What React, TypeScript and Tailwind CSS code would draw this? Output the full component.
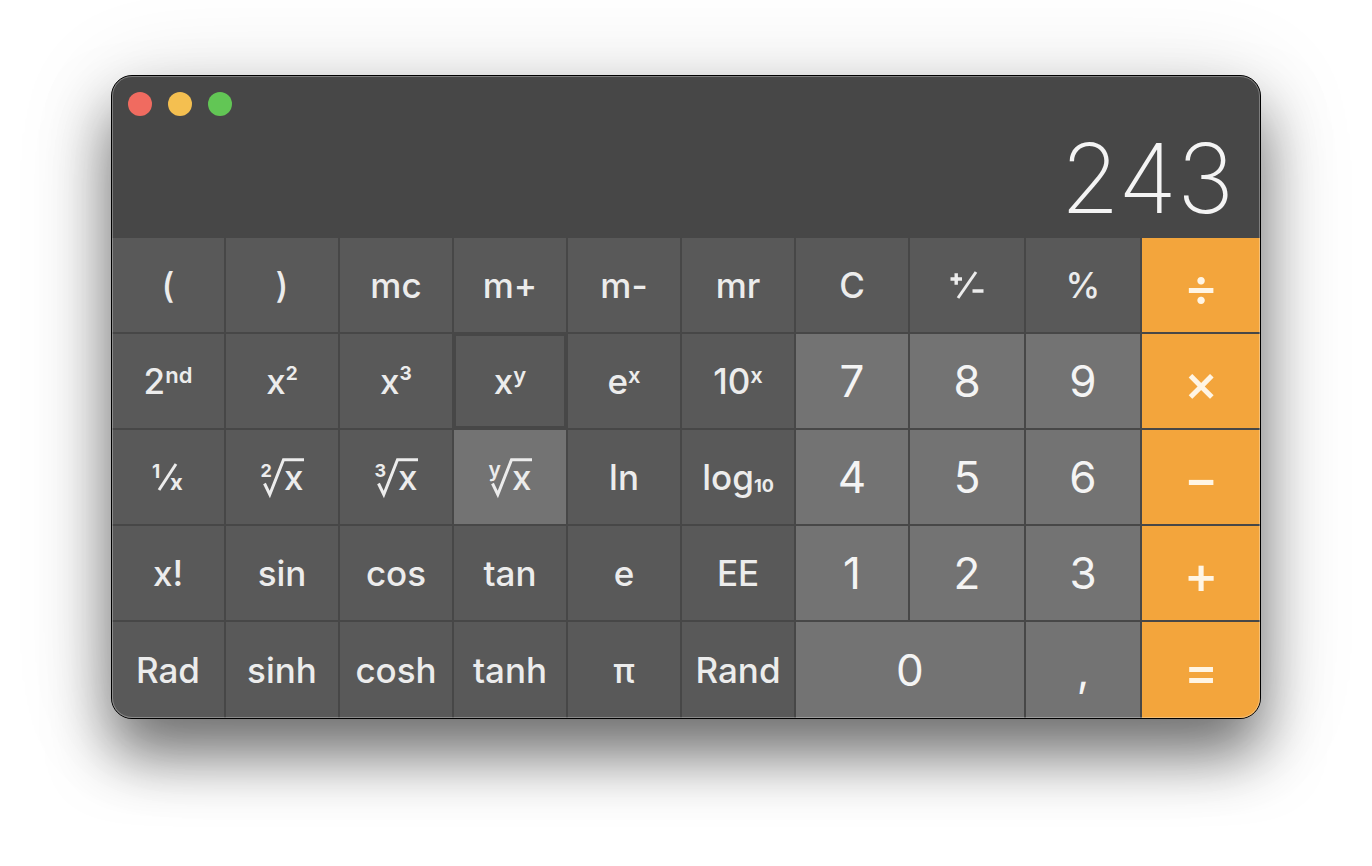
import type { ReactNode } from 'react'

type Tone = 'function' | 'digit' | 'operator'

const tones: Record<Tone, string> = {
  function: 'bg-[#595959] text-[35px] font-medium text-[#ececec] active:bg-[#737373]',
  digit: 'bg-[#737373] text-[44px] text-[#f4f4f4] active:bg-[#8c8c8c]',
  operator: 'bg-[#f3a53c] pt-1 text-[52px] font-medium text-[#fff5e4] active:bg-[#c9842b]',
}

interface KeyProps {
  tone?: Tone
  label?: string
  className?: string
  children: ReactNode
}

function Key({ tone = 'function', label, className = '', children }: KeyProps) {
  return (
    <button
      type="button"
      aria-label={label}
      className={`flex min-w-0 items-center justify-center leading-none ${tones[tone]} ${className}`}
    >
      {children}
    </button>
  )
}

function Power({ base, exponent }: { base: string; exponent: string }) {
  const size = /\d/.test(exponent) ? 'text-[19px] font-bold' : 'text-[22px] font-semibold'
  return (
    <span className="flex items-start">
      {base}
      <span className={`leading-none ${size}`}>{exponent}</span>
    </span>
  )
}

function Root({ index }: { index: string }) {
  const letter = index === 'y'
  return (
    <svg viewBox="-4 -8 56 56" className="size-14" fill="currentColor" aria-hidden="true">
      <path
        d="M6.5 26.5 11.8 37.5 25.5 2.8H46"
        fill="none"
        stroke="currentColor"
        strokeWidth="3"
      />
      <text x="2.5" y="19.5" fontSize={letter ? 21 : 18} fontWeight={letter ? 600 : 700}>
        {index}
      </text>
      <text x="26" y="33" fontSize="35">
        x
      </text>
    </svg>
  )
}

function Reciprocal() {
  return (
    <svg viewBox="-4 -8 56 56" className="size-14" fill="currentColor" aria-hidden="true">
      <path d="M15 33 32 7" fill="none" stroke="currentColor" strokeWidth="3" />
      <text x="8" y="20.5" fontSize="19" fontWeight="700">
        1
      </text>
      <text x="26" y="33" fontSize="22" fontWeight="700">
        x
      </text>
    </svg>
  )
}

function PlusMinus() {
  return (
    <svg
      viewBox="0 0 40 40"
      className="h-10 w-10"
      fill="none"
      stroke="currentColor"
      strokeWidth="3.4"
      aria-hidden="true"
    >
      <path d="M3.5 14h11.5M9.2 8.2v11.6M25.5 26h11" />
      <path d="M11 33 29 7" strokeWidth="3" />
    </svg>
  )
}

export default function App() {
  return (
    <main className="min-h-screen bg-white px-[111px] pt-[75px] pb-[147px] font-['Inter','Liberation_Sans',sans-serif]">
      <section
        aria-label="Calculator"
        className="relative rounded-[21px] border border-black bg-[#474747] shadow-[0_36px_60px_rgba(0,0,0,0.52),0_10px_100px_rgba(0,0,0,0.14)]"
      >
        <div className="overflow-hidden rounded-[20px]">
          <header className="flex h-[162px] flex-col justify-between pt-4">
            <div className="flex gap-4 px-4">
              <button type="button" aria-label="Close" className="size-6 rounded-full bg-[#f06b60]" />
              <button type="button" aria-label="Minimize" className="size-6 rounded-full bg-[#f4bf50]" />
              <button type="button" aria-label="Zoom" className="size-6 rounded-full bg-[#62c655]" />
            </div>
            <output className="block px-[26px] pb-3 text-right text-[96px] leading-none font-extralight text-[#f4f4f4]">
              243
            </output>
          </header>

          <div className="grid grid-cols-[repeat(7,112fr)_114fr_114fr_118fr] grid-rows-[repeat(4,94px)_96px] gap-[2px]">
            <Key>(</Key>
            <Key>)</Key>
            <Key>mc</Key>
            <Key>m+</Key>
            <Key>m-</Key>
            <Key>mr</Key>
            <Key>C</Key>
            <Key label="Plus minus"><PlusMinus /></Key>
            <Key>%</Key>
            <Key tone="operator">÷</Key>

            <Key><Power base="2" exponent="nd" /></Key>
            <Key><Power base="x" exponent="2" /></Key>
            <Key><Power base="x" exponent="3" /></Key>
            <Key className="outline-2 -outline-offset-2 outline-[#474747]"><Power base="x" exponent="y" /></Key>
            <Key><Power base="e" exponent="x" /></Key>
            <Key><Power base="10" exponent="x" /></Key>
            <Key tone="digit">7</Key>
            <Key tone="digit">8</Key>
            <Key tone="digit">9</Key>
            <Key tone="operator">×</Key>

            <Key label="Reciprocal"><Reciprocal /></Key>
            <Key label="Square root"><Root index="2" /></Key>
            <Key label="Cube root"><Root index="3" /></Key>
            <Key label="Nth root" className="bg-[#737373]!"><Root index="y" /></Key>
            <Key>ln</Key>
            <Key>
              <span className="flex items-end">
                log<span className="text-[18px] leading-none font-bold">10</span>
              </span>
            </Key>
            <Key tone="digit">4</Key>
            <Key tone="digit">5</Key>
            <Key tone="digit">6</Key>
            <Key tone="operator">−</Key>

            <Key>x!</Key>
            <Key>sin</Key>
            <Key>cos</Key>
            <Key>tan</Key>
            <Key>e</Key>
            <Key>EE</Key>
            <Key tone="digit">1</Key>
            <Key tone="digit">2</Key>
            <Key tone="digit">3</Key>
            <Key tone="operator">+</Key>

            <Key>Rad</Key>
            <Key>sinh</Key>
            <Key>cosh</Key>
            <Key>tanh</Key>
            <Key>π</Key>
            <Key>Rand</Key>
            <Key tone="digit" className="col-span-2">0</Key>
            <Key tone="digit">,</Key>
            <Key tone="operator">=</Key>
          </div>
        </div>
        <div className="pointer-events-none absolute inset-0 rounded-[20px] border border-white/30" />
      </section>
    </main>
  )
}
